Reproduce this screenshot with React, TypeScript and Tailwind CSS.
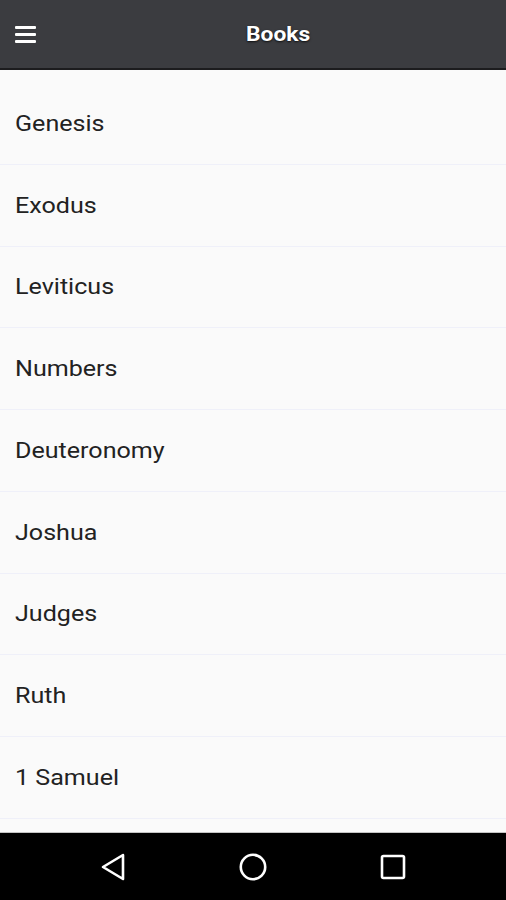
const books = ["Genesis", "Exodus", "Leviticus", "Numbers", "Deuteronomy", "Joshua", "Judges", "Ruth", "1 Samuel"];

const BackIcon = () => (
    <svg width="26" height="28" viewBox="0 0 26 28" fill="none">
        <path d="M23 2 L3 14 L23 26 Z" stroke="white" strokeWidth="2.6" strokeLinejoin="round" />
    </svg>
);

const HomeIcon = () => (
    <svg width="28" height="28" viewBox="0 0 28 28" fill="none">
        <circle cx="14" cy="14" r="12.2" stroke="white" strokeWidth="2.6" />
    </svg>
);

const RecentsIcon = () => (
    <svg width="26" height="26" viewBox="0 0 26 26" fill="none">
        <rect x="2" y="2" width="22" height="22" rx="1.5" stroke="white" strokeWidth="2.6" />
    </svg>
);

const App = () => {
    return (
        <div className="w-[506px] h-[900px] flex flex-col bg-[#fafafa] font-['Roboto',sans-serif] overflow-hidden">
            <header className="h-[70px] flex items-center bg-[#3b3c40] border-b-2 border-[#1c1c1e] shrink-0">
                <button className="w-[52px] h-full flex items-center pl-[15px]">
                    <span className="flex flex-col gap-[4px]">
                        <span className="block w-[21px] h-[3px] bg-white rounded-[1px]" />
                        <span className="block w-[21px] h-[3px] bg-white rounded-[1px]" />
                        <span className="block w-[21px] h-[3px] bg-white rounded-[1px]" />
                    </span>
                </button>
                <h1 className="flex-1 flex justify-center pr-[2px]">
                    <span className="inline-block text-white text-[20px] font-bold scale-x-[1.14] [text-shadow:0_1px_2px_rgba(0,0,0,0.8)]">Books</span>
                </h1>
            </header>
            <ul className="flex-1 pt-[13px]">
                {books.map((b) => (
                    <li key={b} className="h-[81.75px] flex items-center pl-[15px] border-b border-[#eff0f9]">
                        <span className="inline-block origin-left scale-x-[1.14] text-[22px] text-[#222222]">{b}</span>
                    </li>
                ))}
            </ul>
            <nav className="h-[68px] shrink-0 bg-black border-t border-[#c4c4c4] flex items-center justify-center gap-[113px]">
                <BackIcon />
                <HomeIcon />
                <RecentsIcon />
            </nav>
        </div>
    );
};

export default App;
